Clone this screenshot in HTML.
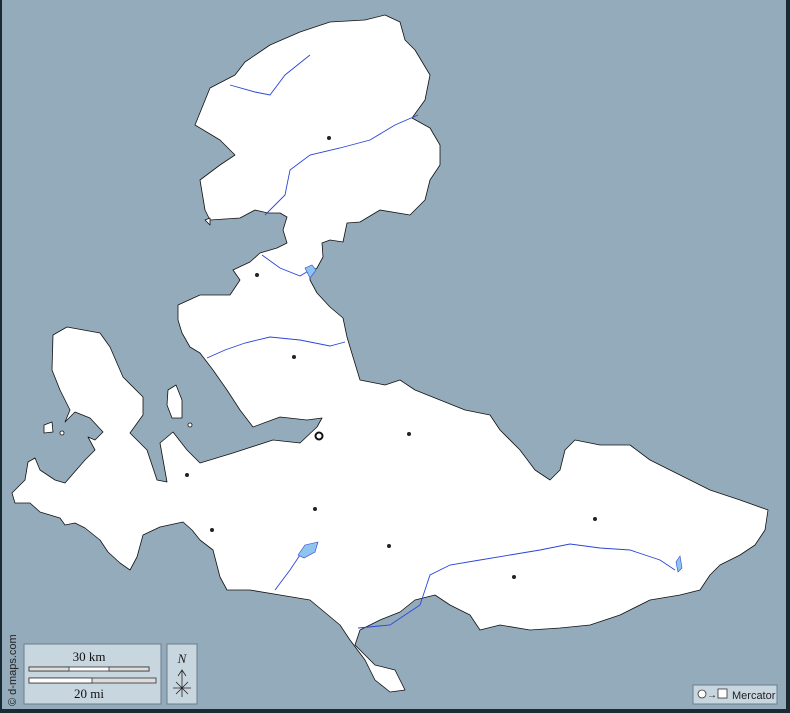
<!DOCTYPE html>
<html><head><meta charset="utf-8"><style>
html,body{margin:0;padding:0;width:790px;height:713px;overflow:hidden;background:#94abbb;font-family:"Liberation Serif",serif}
svg{position:absolute;left:0;top:0}
</style></head><body>
<svg width="790" height="713" viewBox="0 0 790 713">
<rect x="0" y="0" width="790" height="713" fill="#94abbb"/>
<rect x="0" y="709" width="790" height="4" fill="#1a2a33"/>
<rect x="786" y="0" width="4" height="713" fill="#1a2a33"/>
<rect x="0" y="0" width="2" height="713" fill="#1a2a33"/>
<g fill="#fff" stroke="#111" stroke-width="0.8" stroke-linejoin="round">
<path d="M195,125 L210,88 L235,75 L245,62 L270,45 L300,32 L330,22 L365,20 L385,15 L400,22 L405,40 L415,50 L430,75 L425,100 L412,118 L430,128 L440,145 L440,165 L430,180 L425,200 L410,215 L380,210 L360,222 L347,223 L343,242 L330,240 L322,243 L323,257 L317,268 L310,272 L310,280 L317,293 L330,307 L343,318 L347,337 L353,357 L360,380 L385,385 L400,380 L415,390 L440,400 L465,410 L490,415 L500,430 L520,450 L535,470 L550,480 L560,470 L565,450 L575,440 L600,445 L630,445 L650,460 L680,475 L710,490 L740,500 L768,510 L765,530 L755,545 L740,555 L720,565 L710,575 L700,590 L680,595 L650,600 L620,615 L590,625 L560,628 L530,630 L500,625 L480,630 L470,615 L450,605 L435,595 L415,600 L400,612 L380,620 L360,630 L355,645 L375,665 L395,670 L405,690 L390,692 L375,680 L365,660 L350,640 L340,625 L310,600 L280,595 L250,590 L227,590 L220,577 L213,550 L200,540 L192,530 L183,522 L160,527 L143,535 L137,557 L130,570 L120,563 L108,552 L100,540 L85,528 L75,523 L65,525 L60,518 L40,512 L30,503 L15,503 L12,493 L25,480 L28,462 L35,458 L40,470 L55,480 L65,483 L85,460 L95,450 L88,437 L95,440 L103,432 L90,418 L75,412 L65,422 L70,410 L60,390 L52,370 L53,335 L67,327 L100,333 L110,347 L123,377 L143,397 L143,415 L130,433 L147,450 L157,480 L167,482 L160,443 L173,432 L187,450 L200,463 L233,453 L273,440 L300,443 L317,427 L322,418 L307,420 L280,417 L253,427 L240,410 L227,390 L213,370 L200,353 L190,347 L182,333 L178,320 L178,305 L200,295 L230,295 L240,280 L233,270 L250,262 L260,253 L277,248 L287,243 L283,230 L287,217 L280,213 L268,213 L255,210 L240,218 L210,220 L205,210 L200,180 L220,165 L235,155 L220,140 Z"/>
<path d="M168,390 L176,385 L182,400 L182,418 L172,418 L167,405 Z"/>
<path d="M44,425 L52,422 L53,432 L44,433 Z"/>
<circle cx="62" cy="433" r="2"/>
<circle cx="190" cy="425" r="2"/>
<path d="M205,220 L210,218 L210,225 Z"/>
</g>
<g fill="none" stroke="#2a45d8" stroke-width="0.9">
<path d="M230,85 L255,92 L270,95 L285,75 L310,55"/>
<path d="M265,215 L285,195 L290,170 L310,155 L340,148 L370,140 L395,125 L418,115"/>
<path d="M262,255 L280,268 L300,276 L310,270"/>
<path d="M207,358 L225,350 L245,343 L270,337 L300,340 L330,346 L345,342"/>
<path d="M275,590 L290,570 L300,555 L310,545"/>
<path d="M358,628 L390,625 L420,605 L430,575 L450,565 L480,560 L510,555 L540,550 L570,544 L600,548 L630,550 L660,560 L675,570"/>
</g>
<path d="M298,555 L305,545 L318,542 L315,552 L304,558 Z" fill="#8fc3f0" stroke="#2a45d8" stroke-width="0.6"/>
<path d="M676,562 L680,556 L682,568 L678,572 Z" fill="#8fc3f0" stroke="#2a45d8" stroke-width="0.6"/>
<path d="M305,268 L312,265 L316,270 L310,278 Z" fill="#8fc3f0" stroke="#2a45d8" stroke-width="0.6"/>
<g fill="#222">
<circle cx="329" cy="138" r="2"/><circle cx="257" cy="275" r="2"/><circle cx="294" cy="357" r="2"/>
<circle cx="409" cy="434" r="2"/><circle cx="187" cy="475" r="2"/><circle cx="315" cy="509" r="2"/>
<circle cx="212" cy="530" r="2"/><circle cx="389" cy="546" r="2"/><circle cx="595" cy="519" r="2"/>
<circle cx="514" cy="577" r="2"/>
</g>
<circle cx="319" cy="436" r="3.5" fill="#fff" stroke="#111" stroke-width="2"/>
<rect x="24" y="644" width="137" height="60" fill="#c8d6e0" stroke="#6a7f8c"/>
<text x="89" y="661" font-size="13" text-anchor="middle" fill="#111">30 km</text>
<rect x="29" y="667" width="120" height="4" fill="#fff" stroke="#333" stroke-width="0.8"/>
<rect x="29" y="667" width="40" height="4" fill="#ddd" stroke="#333" stroke-width="0.8"/>
<rect x="109" y="667" width="40" height="4" fill="#ddd" stroke="#333" stroke-width="0.8"/>
<rect x="29" y="678" width="127" height="5" fill="#ddd" stroke="#333" stroke-width="0.8"/>
<rect x="29" y="678" width="63" height="5" fill="#fff" stroke="#333" stroke-width="0.8"/>
<text x="89" y="698" font-size="13" text-anchor="middle" fill="#111">20 mi</text>
<rect x="167" y="644" width="30" height="60" fill="#c8d6e0" stroke="#6a7f8c"/>
<text x="182" y="663" font-size="13" font-style="italic" text-anchor="middle" fill="#222">N</text>
<g stroke="#222" stroke-width="0.8" fill="none">
<path d="M182,671 L182,697 M178,676 L182,670 L186,676 M173,688 L191,688 M176,682 L188,694 M188,682 L176,694"/>
</g>
<text transform="translate(16,706) rotate(-90)" font-family="Liberation Sans,sans-serif" font-size="11" fill="#222">© d-maps.com</text>
<rect x="693" y="685" width="84" height="19" fill="#c8d6e0" stroke="#6a7f8c"/>
<circle cx="702" cy="694" r="4" fill="#fff" stroke="#333" stroke-width="0.8"/>
<text x="707" y="698" font-family="Liberation Sans,sans-serif" font-size="10" fill="#222">→</text>
<rect x="718" y="689" width="9" height="9" fill="#fff" stroke="#333" stroke-width="0.8"/>
<text x="732" y="699" font-family="Liberation Sans,sans-serif" font-size="11" fill="#222">Mercator</text>
</svg>
</body></html>
